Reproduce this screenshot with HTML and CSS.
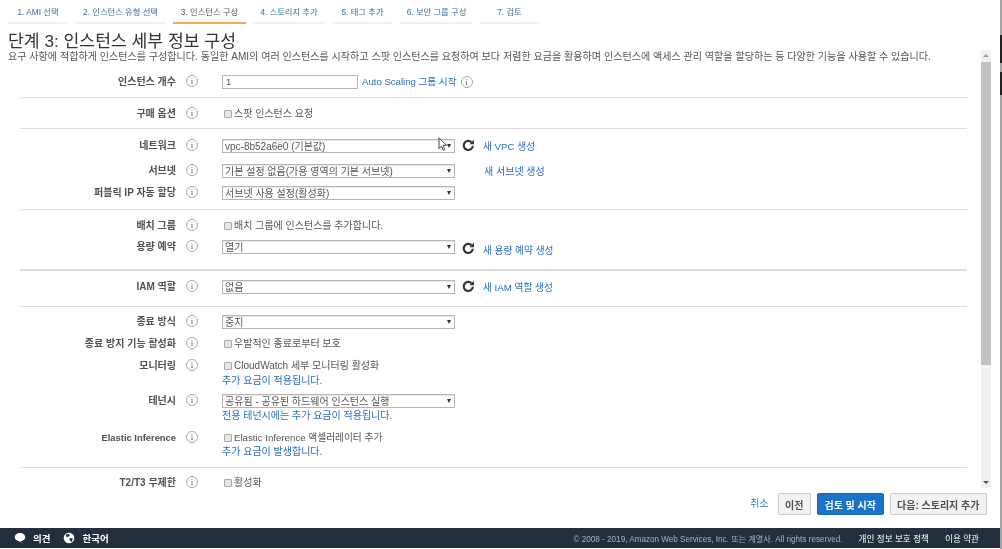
FILE: index.html
```html
<!DOCTYPE html>
<html lang="ko">
<head>
<meta charset="utf-8">
<title>인스턴스 세부 정보 구성</title>
<link rel="stylesheet" href="styles.css">
</head>
<body>
<div class="page">
  <main class="main">
    <nav class="tabs">
      <a class="tab t1">1. AMI 선택</a>
      <a class="tab t2">2. 인스턴스 유형 선택</a>
      <a class="tab t3 active">3. 인스턴스 구성</a>
      <a class="tab t4">4. 스토리지 추가</a>
      <a class="tab t5">5. 태그 추가</a>
      <a class="tab t6">6. 보안 그룹 구성</a>
      <a class="tab t7">7. 검토</a>
    </nav>
    <h1 class="title">단계 3: 인스턴스 세부 정보 구성</h1>
    <div class="scroller">
      <div class="form">
        <p class="desc">요구 사항에 적합하게 인스턴스를 구성합니다. 동일한 AMI의 여러 인스턴스를 시작하고 스팟 인스턴스를 요청하여 보다 저렴한 요금을 활용하며 인스턴스에 액세스 관리 역할을 할당하는 등 다양한 기능을 사용할 수 있습니다.</p>
        <section class="group g1">
          <div class="row h24">
            <label class="lbl">인스턴스 개수</label><span class="info">i</span>
            <div class="ctl"><input class="num" value="1"><a class="link as">Auto Scaling 그룹 시작</a><span class="info small-gap">i</span></div>
          </div>
        </section>
        <section class="group g2">
          <div class="row h20">
            <label class="lbl">구매 옵션</label><span class="info">i</span>
            <div class="ctl"><input type="checkbox" class="chk"><span>스팟 인스턴스 요청</span></div>
          </div>
        </section>
        <section class="group g3">
          <div class="row r25">
            <label class="lbl">네트워크</label><span class="info">i</span>
            <div class="ctl"><div class="sel"><select><option>vpc-8b52a6e0 (기본값)</option></select></div>
              <svg class="refresh" viewBox="0 0 12 12"><path d="M10 6.200A4.200 4.200 0 1 1 8.700 2.900" fill="none" stroke="#333" stroke-width="2"/><path d="M11 .8v4.100H6.900z" fill="#333"/></svg>
              <a class="link">새 VPC 생성</a></div>
          </div>
          <div class="row h22">
            <label class="lbl">서브넷</label><span class="info">i</span>
            <div class="ctl"><div class="sel"><select><option>기본 설정 없음(가용 영역의 기본 서브넷)</option></select></div><a class="link nolead">새 서브넷 생성</a></div>
          </div>
          <div class="row h22">
            <label class="lbl">퍼블릭 IP 자동 할당</label><span class="info">i</span>
            <div class="ctl"><div class="sel"><select><option>서브넷 사용 설정(활성화)</option></select></div></div>
          </div>
        </section>
        <section class="group g4">
          <div class="row r21">
            <label class="lbl">배치 그룹</label><span class="info">i</span>
            <div class="ctl"><input type="checkbox" class="chk"><span>배치 그룹에 인스턴스를 추가합니다.</span></div>
          </div>
          <div class="row h22">
            <label class="lbl">용량 예약</label><span class="info">i</span>
            <div class="ctl"><div class="sel"><select><option>열기</option></select></div>
              <svg class="refresh low" viewBox="0 0 12 12"><path d="M10 6.200A4.200 4.200 0 1 1 8.700 2.900" fill="none" stroke="#333" stroke-width="2"/><path d="M11 .8v4.100H6.900z" fill="#333"/></svg>
              <a class="link low">새 용량 예약 생성</a></div>
          </div>
        </section>
        <section class="group g5">
          <div class="row h20">
            <label class="lbl">IAM 역할</label><span class="info">i</span>
            <div class="ctl"><div class="sel"><select><option>없음</option></select></div>
              <svg class="refresh" viewBox="0 0 12 12"><path d="M10 6.200A4.200 4.200 0 1 1 8.700 2.900" fill="none" stroke="#333" stroke-width="2"/><path d="M11 .8v4.100H6.900z" fill="#333"/></svg>
              <a class="link">새 IAM 역할 생성</a></div>
          </div>
        </section>
        <section class="group g6">
          <div class="row h22">
            <label class="lbl">종료 방식</label><span class="info">i</span>
            <div class="ctl"><div class="sel"><select><option>중지</option></select></div></div>
          </div>
          <div class="row h22">
            <label class="lbl">종료 방지 기능 활성화</label><span class="info">i</span>
            <div class="ctl"><input type="checkbox" class="chk"><span>우발적인 종료로부터 보호</span></div>
          </div>
          <div class="row r-mon">
            <label class="lbl">모니터링</label><span class="info">i</span>
            <div class="ctl col"><div class="line"><input type="checkbox" class="chk"><span>CloudWatch 세부 모니터링 활성화</span></div><a class="link">추가 요금이 적용됩니다.</a></div>
          </div>
          <div class="row r-ten">
            <label class="lbl">테넌시</label><span class="info">i</span>
            <div class="ctl col"><div class="sel"><select><option>공유됨 - 공유된 하드웨어 인스턴스 실행</option></select></div><a class="link">전용 테넌시에는 추가 요금이 적용됩니다.</a></div>
          </div>
          <div class="row r-ei">
            <label class="lbl lbl-latin">Elastic Inference</label><span class="info">i</span>
            <div class="ctl col"><div class="line"><input type="checkbox" class="chk"><span class="latin">Elastic Inference 액셀러레이터 추가</span></div><a class="link tight">추가 요금이 발생합니다.</a></div>
          </div>
        </section>
        <section class="group last">
          <div class="row h20">
            <label class="lbl">T2/T3 무제한</label><span class="info">i</span>
            <div class="ctl"><input type="checkbox" class="chk"><span>활성화</span></div>
          </div>
        </section>
      </div>
      <div class="scrollbar"><span class="arrow up"></span><div class="thumb"></div><span class="arrow down"></span></div>
    </div>
    <div class="actions">
      <a class="link cancel">취소</a>
      <button class="btn">이전</button>
      <button class="btn primary">검토 및 시작</button>
      <button class="btn">다음: 스토리지 추가</button>
    </div>
  </main>
  <footer class="footer">
    <svg class="ficon" viewBox="0 0 12 12"><path d="M6 1c3 0 5.200 1.700 5.200 4.100S9 9.200 6.600 9.200c-.3 0-.6 0-.8-.1L9.500 11.500 3.400 8.600C1.700 8 .8 6.700.8 5.100.8 2.700 3 1 6 1z" fill="#fff"/></svg>
    <span class="fb">의견</span>
    <svg class="ficon lang" viewBox="0 0 12 12"><circle cx="6" cy="6" r="5.300" fill="#fff"/><path d="M3 2.500 6 2l.8 1.500L5 5 3 4.500zM6.500 6l3.500.5-1.500 3.500L6.800 8.500z" fill="#232f3e"/></svg>
    <span class="fb">한국어</span>
    <span class="spacer"></span>
    <span class="copy">© 2008 - 2019, Amazon Web Services, Inc. 또는 계열사. All rights reserved.</span>
    <a class="flink">개인 정보 보호 정책</a>
    <a class="flink">이용 약관</a>
  </footer>
  <svg class="cursor" viewBox="0 0 14 18"><path d="M1 1v13l3-3 2 5 2-1-2-5h4z" fill="#fff" stroke="#222" stroke-width="1"/></svg>
  <span class="edge e1"></span>
  <span class="edge e2"></span>
</div>
</body>
</html>
```
FILE: styles.css
```css
* { box-sizing: border-box; }
html, body { margin: 0; height: 100%; overflow: hidden; background: #fff; }
body {
  font-family: "Liberation Sans", "Noto Sans CJK KR", sans-serif;
  font-size: 10px;
  color: #555;
}
.page { position: relative; width: 1002px; height: 549px; display: flex; flex-direction: column; border-right: 2px solid #a5a5a5; filter: blur(0.35px); }
.main { flex: 1; min-height: 0; display: flex; flex-direction: column; }

.tabs { display: flex; height: 24px; padding-left: 8px; gap: 7px; flex: none; }
.tab { height: 24px; padding-top: 7px; font-size: 8.3px; line-height: 10px; color: #3c6ea5; text-align: center; border-bottom: 2px solid #f2f2f2; }
.tab.active { color: #555; border-bottom-color: #f0ad4e; }
.t1 { width: 60px; } .t2 { width: 91px; } .t3 { width: 73px; } .t4 { width: 72px; }
.t5 { width: 61px; } .t6 { width: 73px; } .t7 { width: 59px; }

.title { margin: 7px 0 0 8px; font-size: 17.2px; line-height: 20px; height: 19px; font-weight: 400; color: #333; flex: none; }
.desc { margin: 0 0 0 -12px; font-size: 10.07px; line-height: 13px; color: #555; white-space: nowrap; }

.scroller { flex: 1; min-height: 0; overflow: hidden; display: flex; }
.form { width: 967px; height: 100%; padding-left: 20px; overflow: hidden; flex: none; }
.group { border-bottom: 1px solid #ddd; }
.group.last { border-bottom: 0; }
.g1 { height: 35px; padding-top: 12px; }
.g2 { height: 31px; padding-top: 9px; }
.g3 { height: 81px; padding-top: 10px; }
.g4 { height: 61px; padding-top: 9px; border-bottom-width: 2px; }
.g5 { height: 36px; padding-top: 9px; }
.g6 { height: 161px; padding-top: 8px; }
.last { padding-top: 8px; }

.row { display: flex; align-items: flex-start; }
.h20 { height: 20px; } .h22 { height: 22px; } .h24 { height: 24px; }
.r21 { height: 21px; } .r25 { height: 25px; }
.r-mon { height: 35px; } .r-ten { height: 37px; } .r-ei { height: 30px; }
.lbl { width: 156px; text-align: right; font-size: 10px; line-height: 14px; font-weight: 700; color: #505050; flex: none; }
.lbl-latin { font-size: 9.4px; }
.info {
  flex: none; width: 12px; height: 12px; margin: 0 0 0 10px; border: 1px solid #aaa; border-radius: 50%;
  font-family: "Liberation Serif", serif; font-size: 9px; line-height: 10px; text-align: center; color: #666;
}
.ctl { display: flex; align-items: flex-start; margin-left: 24px; line-height: 14px; flex: 1; }
.ctl.col { flex-direction: column; }
.line { display: flex; align-items: flex-start; }
.latin { font-size: 9.7px; }
.link { color: #2a6ebb; text-decoration: none; line-height: 14px; }
.col .link { margin-top: 1px; }
.col .link.tight { margin-top: 0; }
.num { width: 136px; height: 14px; border: 1px solid #b5b5b5; padding: 0 3px; font: inherit; font-size: 9.5px; color: #555; background: #fff; border-radius: 0; }
.as { margin-left: 4px; font-size: 9.6px; }
.small-gap { margin-left: 4px; margin-top: 1px; }
.chk { appearance: none; width: 8px; height: 8px; margin: 3px 2px 0 2px; background: #e6e6e6; border: 1px solid #aaa; border-radius: 1px; flex: none; }

.sel { position: relative; width: 233px; height: 14px; flex: none; }
.sel select {
  appearance: none; display: block; width: 100%; height: 100%; padding: 1px 14px 0 2px; margin: 0;
  border: 1px solid #b5b5b5; border-radius: 0; background: #fff; font: inherit; color: #555; line-height: 12px;
  box-shadow: inset 0 1px 1px #e8e8e8;
}
.sel::after { content: ""; position: absolute; right: 4px; top: 5px; border: 2px solid transparent; border-top: 4px solid #333; border-bottom: 0; }
.refresh { width: 13px; height: 13px; margin: 0 0 0 7px; flex: none; }
.refresh + .link { margin-left: 8px; margin-top: 1px; font-size: 9.7px; }
.refresh.low { margin-top: 2px; }
.refresh + .link.low { margin-top: 4px; }
.nolead { margin-left: 29px; margin-top: 1px; }

.scrollbar { width: 10px; margin-left: 14px; height: 100%; display: flex; flex-direction: column; background: #f1f1f1; flex: none; }
.arrow { display: block; height: 12px; flex: none; position: relative; }
.arrow::after { content: ""; position: absolute; left: 2px; border: 3px solid transparent; }
.arrow.up::after { top: 4px; border-bottom: 3px solid #999; border-top: 0; }
.arrow.down::after { top: 5px; border-top: 3px solid #555; border-bottom: 0; }
.thumb { height: 303px; flex: none; background: #c1c1c1; }
.scrollbar .down { margin-top: auto; }

.actions { height: 40px; display: flex; align-items: flex-start; justify-content: flex-end; gap: 6px; padding: 5px 13px 0 0; flex: none; }
.cancel { margin: 4px 3px 0 0; color: #2a7ad4; }
.btn { height: 22px; padding: 0 6.5px; border: 1px solid #ccc; border-radius: 2px; background: #f2f2f2; color: #505050; font: inherit; font-weight: 700; font-size: 10px; }
.btn.primary { background: #1a73c9; border-color: #1a6ab8; color: #fff; }

.footer { height: 20px; margin-bottom: 1px; display: flex; align-items: center; padding: 0 21px 0 14px; background: #232f3e; color: #fff; flex: none; }
.ficon { width: 12px; height: 12px; flex: none; }
.fb { font-weight: 700; font-size: 9.5px; margin-left: 7px; }
.lang { margin-left: 13px; }
.spacer { flex: 1; }
.copy { font-size: 8.15px; color: #aab2bb; }
.flink { margin-left: 16px; font-size: 8.6px; color: #fff; }

.cursor { position: absolute; left: 438px; top: 137px; width: 12px; height: 15px; }
.edge { position: absolute; right: -2px; width: 2px; background: #222; }
.e1 { top: 35px; height: 28px; }
.e2 { top: 72px; height: 23px; }
```
